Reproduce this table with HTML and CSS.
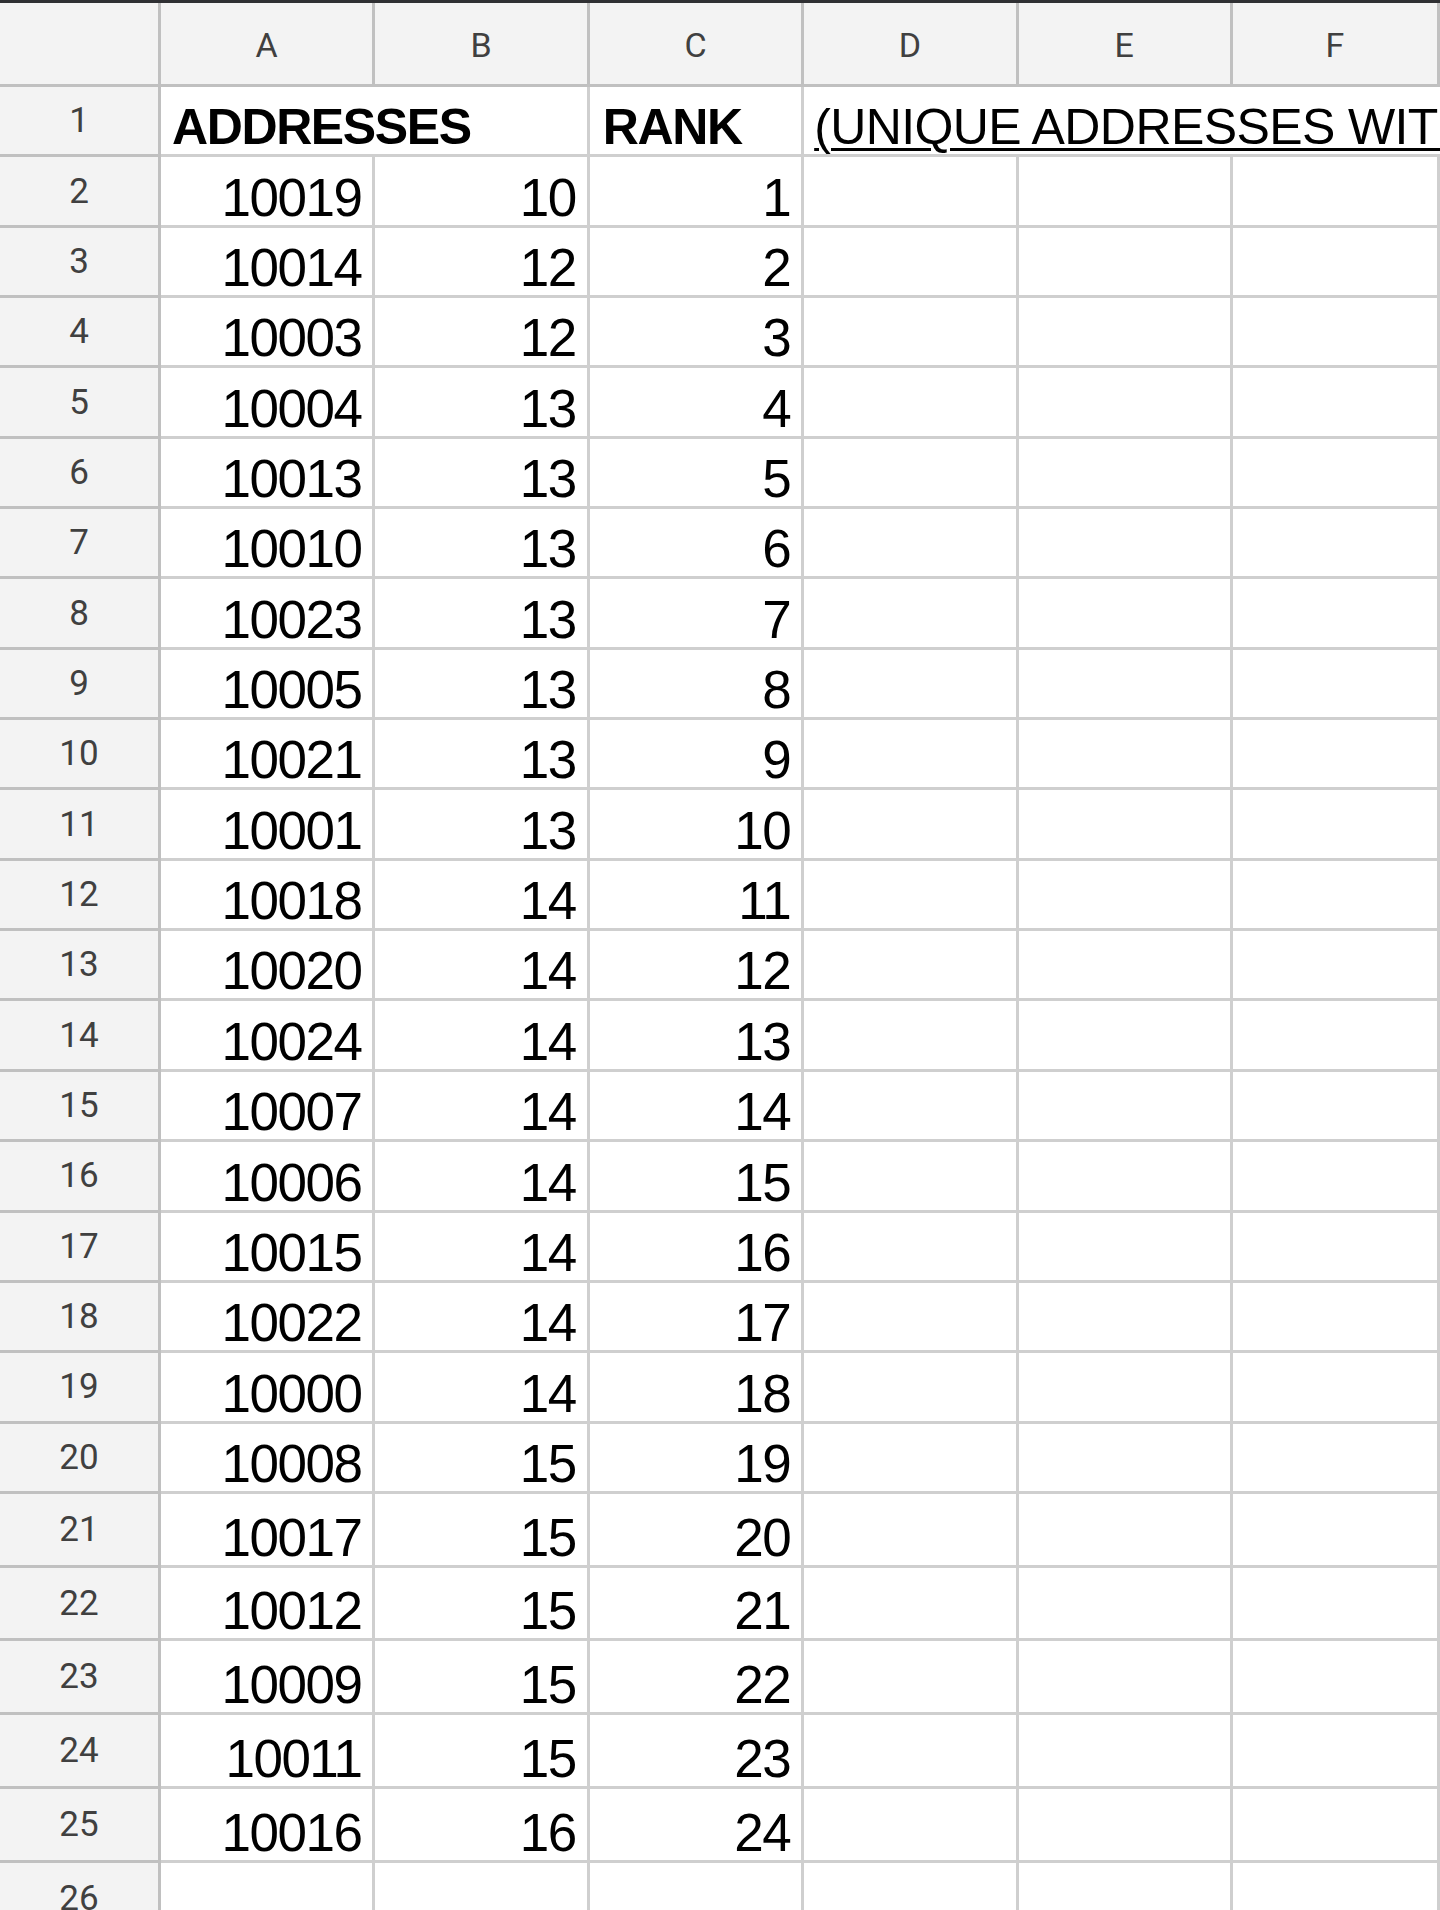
FILE: index.html
```html
<!DOCTYPE html>
<html>
<head>
<meta charset="utf-8">
<link rel="stylesheet" href="styles.css">
</head>
<body>
<div class="topbar"></div>
<div class="sheet">
  <div class="corner"></div>
  <div class="colhead">A</div><div class="colhead">B</div><div class="colhead">C</div><div class="colhead">D</div><div class="colhead">E</div><div class="colhead">F</div>

  <div class="rowhead">1</div>
  <div class="cell span2 bold">ADDRESSES</div>
  <div class="cell bold title">RANK</div>
  <div class="cell span3 link"><span>(UNIQUE ADDRESSES WITH RANK)</span></div>

  <div class="rowhead">2</div><div class="cell num">10019</div><div class="cell num">10</div><div class="cell num">1</div><div class="cell"></div><div class="cell"></div><div class="cell"></div>
  <div class="rowhead">3</div><div class="cell num">10014</div><div class="cell num">12</div><div class="cell num">2</div><div class="cell"></div><div class="cell"></div><div class="cell"></div>
  <div class="rowhead">4</div><div class="cell num">10003</div><div class="cell num">12</div><div class="cell num">3</div><div class="cell"></div><div class="cell"></div><div class="cell"></div>
  <div class="rowhead">5</div><div class="cell num">10004</div><div class="cell num">13</div><div class="cell num">4</div><div class="cell"></div><div class="cell"></div><div class="cell"></div>
  <div class="rowhead">6</div><div class="cell num">10013</div><div class="cell num">13</div><div class="cell num">5</div><div class="cell"></div><div class="cell"></div><div class="cell"></div>
  <div class="rowhead">7</div><div class="cell num">10010</div><div class="cell num">13</div><div class="cell num">6</div><div class="cell"></div><div class="cell"></div><div class="cell"></div>
  <div class="rowhead">8</div><div class="cell num">10023</div><div class="cell num">13</div><div class="cell num">7</div><div class="cell"></div><div class="cell"></div><div class="cell"></div>
  <div class="rowhead">9</div><div class="cell num">10005</div><div class="cell num">13</div><div class="cell num">8</div><div class="cell"></div><div class="cell"></div><div class="cell"></div>
  <div class="rowhead">10</div><div class="cell num">10021</div><div class="cell num">13</div><div class="cell num">9</div><div class="cell"></div><div class="cell"></div><div class="cell"></div>
  <div class="rowhead">11</div><div class="cell num">10001</div><div class="cell num">13</div><div class="cell num">10</div><div class="cell"></div><div class="cell"></div><div class="cell"></div>
  <div class="rowhead">12</div><div class="cell num">10018</div><div class="cell num">14</div><div class="cell num">11</div><div class="cell"></div><div class="cell"></div><div class="cell"></div>
  <div class="rowhead">13</div><div class="cell num">10020</div><div class="cell num">14</div><div class="cell num">12</div><div class="cell"></div><div class="cell"></div><div class="cell"></div>
  <div class="rowhead">14</div><div class="cell num">10024</div><div class="cell num">14</div><div class="cell num">13</div><div class="cell"></div><div class="cell"></div><div class="cell"></div>
  <div class="rowhead">15</div><div class="cell num">10007</div><div class="cell num">14</div><div class="cell num">14</div><div class="cell"></div><div class="cell"></div><div class="cell"></div>
  <div class="rowhead">16</div><div class="cell num">10006</div><div class="cell num">14</div><div class="cell num">15</div><div class="cell"></div><div class="cell"></div><div class="cell"></div>
  <div class="rowhead">17</div><div class="cell num">10015</div><div class="cell num">14</div><div class="cell num">16</div><div class="cell"></div><div class="cell"></div><div class="cell"></div>
  <div class="rowhead">18</div><div class="cell num">10022</div><div class="cell num">14</div><div class="cell num">17</div><div class="cell"></div><div class="cell"></div><div class="cell"></div>
  <div class="rowhead">19</div><div class="cell num">10000</div><div class="cell num">14</div><div class="cell num">18</div><div class="cell"></div><div class="cell"></div><div class="cell"></div>
  <div class="rowhead">20</div><div class="cell num">10008</div><div class="cell num">15</div><div class="cell num">19</div><div class="cell"></div><div class="cell"></div><div class="cell"></div>
  <div class="rowhead">21</div><div class="cell num">10017</div><div class="cell num">15</div><div class="cell num">20</div><div class="cell"></div><div class="cell"></div><div class="cell"></div>
  <div class="rowhead">22</div><div class="cell num">10012</div><div class="cell num">15</div><div class="cell num">21</div><div class="cell"></div><div class="cell"></div><div class="cell"></div>
  <div class="rowhead">23</div><div class="cell num">10009</div><div class="cell num">15</div><div class="cell num">22</div><div class="cell"></div><div class="cell"></div><div class="cell"></div>
  <div class="rowhead">24</div><div class="cell num">10011</div><div class="cell num">15</div><div class="cell num">23</div><div class="cell"></div><div class="cell"></div><div class="cell"></div>
  <div class="rowhead">25</div><div class="cell num">10016</div><div class="cell num">16</div><div class="cell num">24</div><div class="cell"></div><div class="cell"></div><div class="cell"></div>
  <div class="rowhead">26</div><div class="cell"></div><div class="cell"></div><div class="cell"></div><div class="cell"></div><div class="cell"></div><div class="cell"></div>
</div>
</body>
</html>
```

FILE: styles.css
```css
html, body {
  margin: 0;
  padding: 0;
  background: #ffffff;
  overflow: hidden;
}

body {
  width: 1440px;
  height: 1910px;
}

.topbar {
  height: 3px;
  background: #2f3033;
}

.sheet {
  display: grid;
  grid-template-columns: 161px repeat(5, 214.4px) 1fr;
  grid-template-rows: 84px repeat(20, 70.35px) repeat(6, 73.8px);
  font-family: "Liberation Sans", Arial, sans-serif;
  color: #000;
}

.corner,
.colhead,
.rowhead {
  background: #f3f3f3;
  border-right: 3px solid #c0c0c0;
  border-bottom: 3px solid #c0c0c0;
  box-sizing: border-box;
}

.colhead,
.rowhead {
  display: flex;
  align-items: center;
  justify-content: center;
  font-family: Roboto, "Liberation Sans", sans-serif;
  color: #404040;
}

.colhead {
  font-size: 34px;
  padding-top: 2px;
}

.rowhead {
  font-size: 35px;
}

.cell {
  border-right: 3px solid #cfcfcf;
  border-bottom: 3px solid #cfcfcf;
  box-sizing: border-box;
  display: flex;
  align-items: flex-end;
  overflow: hidden;
  white-space: nowrap;
  line-height: 1;
}

.num {
  justify-content: flex-end;
  font-size: 53px;
  letter-spacing: -1.5px;
  padding-right: 11px;
  padding-bottom: 1px;
}

.span2 {
  grid-column: span 2;
}

.span3 {
  grid-column: span 3;
  border-right: none;
}

.bold {
  font-weight: bold;
  font-size: 50px;
  letter-spacing: -1.4px;
  padding-left: 11px;
  padding-bottom: 2px;
}

.title {
  padding-left: 13px;
}

.link {
  font-size: 50px;
  letter-spacing: -0.6px;
  padding-left: 10px;
  padding-bottom: 2px;
}

.link span {
  text-decoration: underline;
  text-decoration-thickness: 3px;
  text-underline-offset: 4px;
}
```
